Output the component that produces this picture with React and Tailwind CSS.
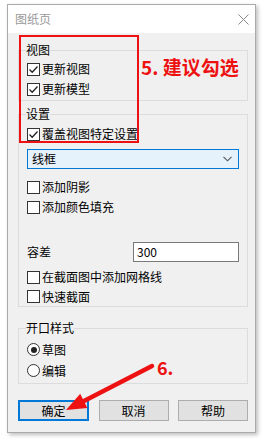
import React from "react";

const font = { fontFamily: '"Noto Sans CJK SC", "Noto Sans", sans-serif' };

function CheckBox({ label, checked, className = "h-[20px]" }) {
	return (
		<div className={`flex items-center ${className}`}>
			<span className="flex h-[13px] w-[13px] shrink-0 items-center justify-center border border-[#333] bg-white">
				{checked && (
					<svg width="11" height="11" viewBox="0 0 11 11">
						<path d="M1.5 5.5 L4.2 8.2 L9.5 2.5" fill="none" stroke="#222" strokeWidth="1.3" />
					</svg>
				)}
			</span>
			<span className="ml-[2px] text-[12px] leading-[14px] text-black">{label}</span>
		</div>
	);
}

function Radio({ label, checked }) {
	return (
		<div className="flex h-[21px] items-center">
			<span className="flex h-[13px] w-[13px] shrink-0 items-center justify-center rounded-full border border-[#333] bg-white">
				{checked && <span className="h-[6px] w-[6px] rounded-full bg-[#222]" />}
			</span>
			<span className="ml-[2px] text-[12px] leading-[14px] text-black">{label}</span>
		</div>
	);
}

function Group({ title, className = "", children }) {
	return (
		<fieldset className={`border border-[#dcdcdc] px-[8px] ${className}`}>
			<legend className="-ml-[1px] px-0 text-[12px] leading-[14px] text-black">{title}</legend>
			{children}
		</fieldset>
	);
}

function Button({ label, primary }) {
	return (
		<button
			className={`flex h-[21px] items-center justify-center bg-[#e1e1e1] text-[12px] leading-[14px] text-black ${
				primary ? "w-[71px] border-2 border-[#0078d7]" : "w-[70px] border border-[#adadad]"
			}`}
		>
			{label}
		</button>
	);
}

export default function App() {
	return (
		<div className="relative h-[439px] w-[270px] overflow-hidden bg-white pl-[7px] pt-[4px]" style={font}>
			<div className="flex h-[429px] w-[249px] flex-col border border-[#aaaaaa] shadow-[2px_2px_4px_rgba(0,0,0,0.25)]">
				<div className="flex h-[28px] items-center justify-between bg-white pl-[7px] pr-[6px]">
					<span className="text-[12px] leading-[14px] text-[#9a9a9a]">图纸页</span>
					<svg width="11" height="11" viewBox="0 0 11 11">
						<path d="M0.5 0.5 L10.5 10.5 M10.5 0.5 L0.5 10.5" stroke="#8a8a8a" strokeWidth="1" />
					</svg>
				</div>
				<div className="flex flex-1 flex-col bg-[#f0f0f0] pl-[10px] pr-[7px] pt-[10px]">
					<Group title="视图" className="pb-[1px]">
						<div className="mt-[2px]">
							<CheckBox label="更新视图" checked />
							<CheckBox label="更新模型" checked />
						</div>
					</Group>

					<Group title="设置" className="mt-[6px] pb-0">
						<div className="mt-[3px]">
							<CheckBox label="覆盖视图特定设置" checked />
						</div>
						<div className="mt-[5px] flex h-[20px] items-center justify-between border border-[#0078d7] bg-[#e5f1fb] pl-[4px] pr-[6px]">
							<span className="text-[12px] leading-[14px] text-black">线框</span>
							<svg width="9" height="6" viewBox="0 0 9 6">
								<path d="M0.5 0.8 L4.5 4.8 L8.5 0.8" fill="none" stroke="#555" strokeWidth="1.1" />
							</svg>
						</div>
						<div className="mt-[8px]">
							<CheckBox label="添加阴影" />
							<CheckBox label="添加颜色填充" />
						</div>
						<div className="mt-[25px] flex items-center justify-between">
							<span className="text-[12px] leading-[14px] text-black">容差</span>
							<div className="flex h-[20px] w-[106px] items-center border border-[#7a7a7a] bg-white pl-[3px] text-[12px] leading-[14px] text-black">
								300
							</div>
						</div>
						<div className="mt-[5px]">
							<CheckBox label="在截面图中添加网格线" />
							<CheckBox label="快速截面" className="h-[19px]" />
						</div>
					</Group>

					<Group title="开口样式" className="mt-[14px] pb-[2px]">
						<div className="mt-[4px]">
							<Radio label="草图" checked />
							<Radio label="编辑" />
						</div>
					</Group>

					<div className="mt-[16px] flex justify-between">
						<Button label="确定" primary />
						<Button label="取消" />
						<Button label="帮助" />
					</div>
				</div>
			</div>

			{/* annotation overlay */}
			<div className="absolute left-[19px] top-[35px] h-[108px] w-[120px] border-2 border-[#ee1111]" />
			<div className="absolute left-[141px] top-[55px] text-[19px] font-bold leading-[24px] text-[#ee1111]">
				5. 建议勾选
			</div>
			<div className="absolute left-[157px] top-[356px] text-[18px] font-bold leading-[22px] text-[#ee1111]">6.</div>
			<svg className="pointer-events-none absolute left-0 top-0" width="270" height="439" viewBox="0 0 270 439">
				<line x1="152" y1="366" x2="84" y2="401" stroke="#ee1111" strokeWidth="4.5" strokeLinecap="round" />
				<polygon points="66,410 80.2,393.8 87.4,408" fill="#ee1111" />
			</svg>
		</div>
	);
}
